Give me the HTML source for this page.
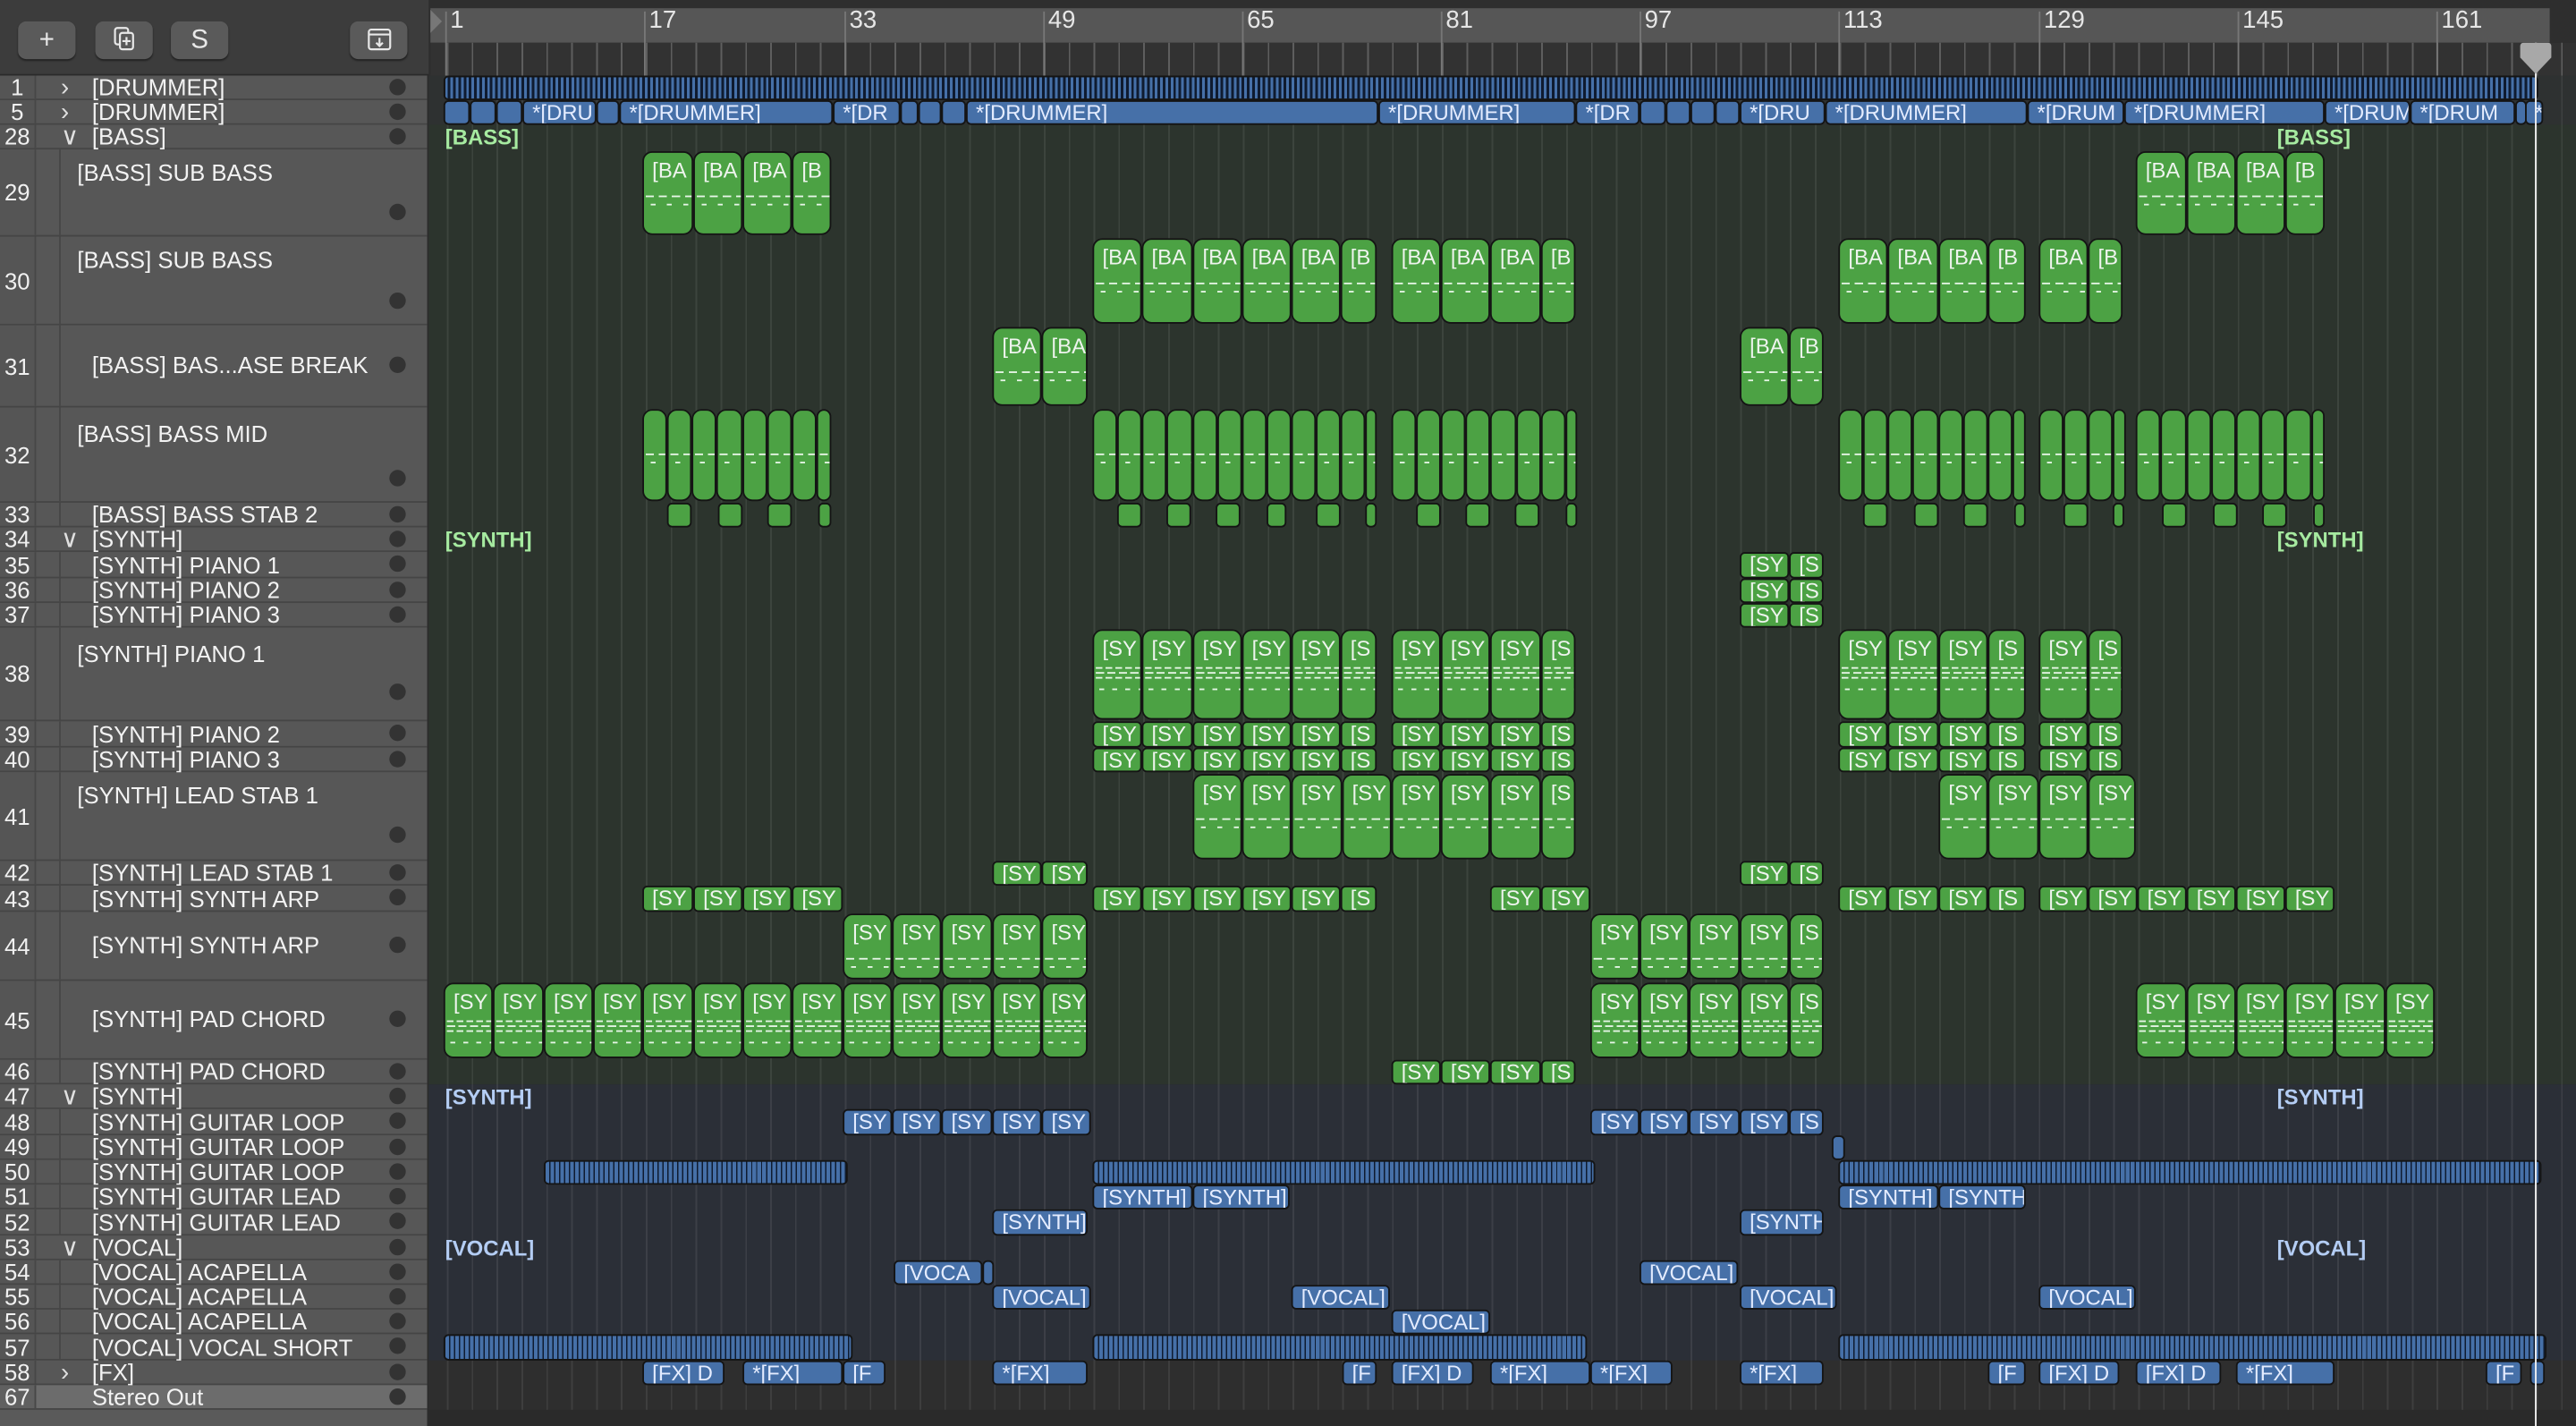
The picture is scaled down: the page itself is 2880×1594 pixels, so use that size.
<!DOCTYPE html>
<html><head><meta charset="utf-8"><style>
*{margin:0;padding:0;box-sizing:border-box}
html,body{width:2880px;height:1594px;overflow:hidden;background:#2a2a2a}
#s{position:absolute;left:0;top:0;width:1568px;height:868px;transform:scale(1.836735);transform-origin:0 0;font-family:"Liberation Sans",sans-serif;background:#2b2b2b;overflow:hidden}
.a{position:absolute}
.btn{position:absolute;top:13px;height:23px;width:35px;background:#5a5a5a;border-radius:5px;color:#e8e8e8;font-size:16px;text-align:center;line-height:23px;box-shadow:0 1px 1px #222}
.bn{position:absolute;top:7px;width:1px;height:39px;background:#777}
.bt{position:absolute;top:4px;color:#e6e6e6;font-size:15px}
.l{position:absolute;left:0;width:260px;background:#575757;border-bottom:1px solid #454545}
.l b{position:absolute;left:0;top:0;width:22px;height:100%;text-align:center;color:#f0f0f0;font-size:14px;font-weight:normal;background:#555;border-right:1px solid #474747}
.l span{position:absolute;left:56px;color:#f2f2f2;font-size:14px;white-space:nowrap}
.l u{position:absolute;left:237px;width:10px;height:10px;border-radius:50%;background:#333;margin-top:-1px}
.l i{position:absolute;left:37px;color:#e0e0e0;font-size:15px;font-style:normal;line-height:15px}
.c::before{content:"";position:absolute;left:36px;top:0;width:1px;height:100%;background:#474747}
.r{position:absolute;left:0;width:1568px}
.r>div{position:absolute;top:0;bottom:0;border:1px solid #141414;border-radius:3px;overflow:hidden;color:#eef4ee;font-size:13px;white-space:nowrap;padding-left:5px;line-height:13px}
.T>div{top:1px;bottom:1px;border-radius:6px;padding-top:3px;line-height:16px}
.g{background:#4ca244}
.b{background:#4670a8;color:#e4ecff!important}
.T>.g{background:repeating-linear-gradient(90deg,#e6f5e6 0 5px,transparent 5px 8px) 1px 26px/100% 1px no-repeat,repeating-linear-gradient(90deg,#e6f5e6 0 3px,transparent 3px 10px) 4px 31px/100% 1px no-repeat,#4ca244}
.P>.g{background:repeating-linear-gradient(90deg,#e6f5e6 0 4px,transparent 4px 6px) 1px 22px/100% 1px no-repeat,repeating-linear-gradient(90deg,#e6f5e6 0 5px,transparent 5px 7px) 1px 25px/100% 1px no-repeat,repeating-linear-gradient(90deg,#e6f5e6 0 4px,transparent 4px 6px) 1px 28px/100% 1px no-repeat,repeating-linear-gradient(90deg,#e6f5e6 0 3px,transparent 3px 8px) 3px 35px/100% 1px no-repeat,#4ca244}
.st{background:repeating-linear-gradient(90deg,#4670a8 0 2.2px,#0f1b30 2.2px 3px)!important}
.gl{position:absolute;font-weight:bold;font-size:13px}
</style></head><body><div id="s">
<!-- header -->
<div class="a" style="left:0;top:0;width:261px;height:46px;background:#3c3c3c;border-bottom:1px solid #2a2a2a"></div>
<div class="btn" style="left:11px">+</div>
<div class="btn" style="left:58px"><svg width="14" height="16" viewBox="0 0 14 16" style="margin-top:3px"><rect x="1" y="1" width="8" height="10" rx="1.5" fill="none" stroke="#e8e8e8" stroke-width="1.2"/><rect x="4" y="4" width="8" height="10" rx="1.5" fill="#5a5a5a" stroke="#e8e8e8" stroke-width="1.2"/><path d="M8 6.5v5M5.5 9h5" stroke="#e8e8e8" stroke-width="1.2"/></svg></div>
<div class="btn" style="left:104px">S</div>
<div class="btn" style="left:213px"><svg width="16" height="16" viewBox="0 0 16 16" style="margin-top:3px"><rect x="1.5" y="2" width="13" height="12" rx="1.5" fill="none" stroke="#e8e8e8" stroke-width="1.2"/><path d="M1.5 5h13M8 7v5M6 10l2 2 2-2" fill="none" stroke="#e8e8e8" stroke-width="1.2"/></svg></div>
<div class="a" style="left:261px;top:0;width:1307px;height:46px;background:#2e2e2e"></div>
<div class="a" style="left:262px;top:5px;width:1290px;height:21px;background:#565656"></div>
<div class="a" style="left:262px;top:26px;width:1306px;height:20px;background:#323232 repeating-linear-gradient(90deg,transparent 0 10px,#5e5e5e 10px 11px,transparent 11px 15.14px)"></div>
<div class="a" style="left:262px;top:6px;width:0;height:0;border-top:7px solid transparent;border-bottom:7px solid transparent;border-left:7px solid #777"></div>
<div class="bn" style="left:271px"></div><div class="bt" style="left:274px">1</div>
<div class="bn" style="left:392px"></div><div class="bt" style="left:395px">17</div>
<div class="bn" style="left:514px"></div><div class="bt" style="left:517px">33</div>
<div class="bn" style="left:635px"></div><div class="bt" style="left:638px">49</div>
<div class="bn" style="left:756px"></div><div class="bt" style="left:759px">65</div>
<div class="bn" style="left:877px"></div><div class="bt" style="left:880px">81</div>
<div class="bn" style="left:998px"></div><div class="bt" style="left:1001px">97</div>
<div class="bn" style="left:1119px"></div><div class="bt" style="left:1122px">113</div>
<div class="bn" style="left:1241px"></div><div class="bt" style="left:1244px">129</div>
<div class="bn" style="left:1362px"></div><div class="bt" style="left:1365px">145</div>
<div class="bn" style="left:1483px"></div><div class="bt" style="left:1486px">161</div>

<!-- left panel -->
<div class="a" style="left:0;top:46px;width:261px;height:822px;background:#5a5a5a;border-right:1px solid #2a2a2a"></div>
<div class="l" style="top:46px;height:15px"><b style="line-height:15px">1</b><i style="top:0">&#x203A;</i><span style="top:-1px">[DRUMMER]</span><u style="top:3px"></u></div>
<div class="l" style="top:61px;height:15px"><b style="line-height:15px">5</b><i style="top:0">&#x203A;</i><span style="top:-1px">[DRUMMER]</span><u style="top:3px"></u></div>
<div class="l" style="top:76px;height:15px"><b style="line-height:15px">28</b><i style="top:0">&#x2228;</i><span style="top:-1px">[BASS]</span><u style="top:3px"></u></div>
<div class="l c" style="top:91px;height:53px"><b style="line-height:53px">29</b><span style="top:6px;left:47px">[BASS] SUB BASS</span><u style="top:34px"></u></div>
<div class="l c" style="top:144px;height:54px"><b style="line-height:54px">30</b><span style="top:6px;left:47px">[BASS] SUB BASS</span><u style="top:35px"></u></div>
<div class="l c" style="top:198px;height:50px"><b style="line-height:50px">31</b><span style="top:16px">[BASS] BAS...ASE BREAK</span><u style="top:20px"></u></div>
<div class="l c" style="top:248px;height:58px"><b style="line-height:58px">32</b><span style="top:8px;left:47px">[BASS] BASS MID</span><u style="top:39px"></u></div>
<div class="l c" style="top:306px;height:15px"><b style="line-height:15px">33</b><span style="top:-1px">[BASS] BASS STAB 2</span><u style="top:3px"></u></div>
<div class="l" style="top:321px;height:15px"><b style="line-height:15px">34</b><i style="top:0">&#x2228;</i><span style="top:-1px">[SYNTH]</span><u style="top:3px"></u></div>
<div class="l c" style="top:336px;height:16px"><b style="line-height:16px">35</b><span style="top:0">[SYNTH] PIANO 1</span><u style="top:3px"></u></div>
<div class="l c" style="top:352px;height:15px"><b style="line-height:15px">36</b><span style="top:-1px">[SYNTH] PIANO 2</span><u style="top:3px"></u></div>
<div class="l c" style="top:367px;height:15px"><b style="line-height:15px">37</b><span style="top:-1px">[SYNTH] PIANO 3</span><u style="top:3px"></u></div>
<div class="l c" style="top:382px;height:57px"><b style="line-height:57px">38</b><span style="top:8px;left:47px">[SYNTH] PIANO 1</span><u style="top:35px"></u></div>
<div class="l c" style="top:439px;height:16px"><b style="line-height:16px">39</b><span style="top:0">[SYNTH] PIANO 2</span><u style="top:3px"></u></div>
<div class="l c" style="top:455px;height:15px"><b style="line-height:15px">40</b><span style="top:-1px">[SYNTH] PIANO 3</span><u style="top:3px"></u></div>
<div class="l c" style="top:470px;height:54px"><b style="line-height:54px">41</b><span style="top:6px;left:47px">[SYNTH] LEAD STAB 1</span><u style="top:34px"></u></div>
<div class="l c" style="top:524px;height:15px"><b style="line-height:15px">42</b><span style="top:-1px">[SYNTH] LEAD STAB 1</span><u style="top:3px"></u></div>
<div class="l c" style="top:539px;height:16px"><b style="line-height:16px">43</b><span style="top:0">[SYNTH] SYNTH ARP</span><u style="top:3px"></u></div>
<div class="l c" style="top:555px;height:42px"><b style="line-height:42px">44</b><span style="top:12px">[SYNTH] SYNTH ARP</span><u style="top:16px"></u></div>
<div class="l c" style="top:597px;height:48px"><b style="line-height:48px">45</b><span style="top:15px">[SYNTH] PAD CHORD</span><u style="top:19px"></u></div>
<div class="l c" style="top:645px;height:15px"><b style="line-height:15px">46</b><span style="top:-1px">[SYNTH] PAD CHORD</span><u style="top:3px"></u></div>
<div class="l" style="top:660px;height:15px"><b style="line-height:15px">47</b><i style="top:0">&#x2228;</i><span style="top:-1px">[SYNTH]</span><u style="top:3px"></u></div>
<div class="l c" style="top:675px;height:16px"><b style="line-height:16px">48</b><span style="top:0">[SYNTH] GUITAR LOOP</span><u style="top:3px"></u></div>
<div class="l c" style="top:691px;height:15px"><b style="line-height:15px">49</b><span style="top:-1px">[SYNTH] GUITAR LOOP</span><u style="top:3px"></u></div>
<div class="l c" style="top:706px;height:15px"><b style="line-height:15px">50</b><span style="top:-1px">[SYNTH] GUITAR LOOP</span><u style="top:3px"></u></div>
<div class="l c" style="top:721px;height:15px"><b style="line-height:15px">51</b><span style="top:-1px">[SYNTH] GUITAR LEAD</span><u style="top:3px"></u></div>
<div class="l c" style="top:736px;height:16px"><b style="line-height:16px">52</b><span style="top:0">[SYNTH] GUITAR LEAD</span><u style="top:3px"></u></div>
<div class="l" style="top:752px;height:15px"><b style="line-height:15px">53</b><i style="top:0">&#x2228;</i><span style="top:-1px">[VOCAL]</span><u style="top:3px"></u></div>
<div class="l c" style="top:767px;height:15px"><b style="line-height:15px">54</b><span style="top:-1px">[VOCAL] ACAPELLA</span><u style="top:3px"></u></div>
<div class="l c" style="top:782px;height:15px"><b style="line-height:15px">55</b><span style="top:-1px">[VOCAL] ACAPELLA</span><u style="top:3px"></u></div>
<div class="l c" style="top:797px;height:15px"><b style="line-height:15px">56</b><span style="top:-1px">[VOCAL] ACAPELLA</span><u style="top:3px"></u></div>
<div class="l c" style="top:812px;height:16px"><b style="line-height:16px">57</b><span style="top:0">[VOCAL] VOCAL SHORT</span><u style="top:3px"></u></div>
<div class="l" style="top:828px;height:15px"><b style="line-height:15px">58</b><i style="top:0">&#x203A;</i><span style="top:-1px">[FX]</span><u style="top:3px"></u></div>
<div class="l" style="top:843px;height:15px;background:#6c6c6c"><b style="line-height:15px;background:#606060">67</b><span style="top:-1px">Stereo Out</span><u style="top:3px"></u></div>

<!-- track backgrounds -->
<div class="a" style="left:261px;top:46px;width:1307px;height:30px;background:#2e3131"></div>
<div class="a" style="left:261px;top:76px;width:1307px;height:584px;background:#2c342d"></div>
<div class="a" style="left:261px;top:660px;width:1307px;height:168px;background:#2b2f37"></div>
<div class="a" style="left:261px;top:828px;width:1307px;height:30px;background:#2e2e2e"></div>
<div class="a" style="left:261px;top:858px;width:1307px;height:10px;background:#2a2a2a"></div>
<div class="a" style="left:272px;top:46px;width:1296px;height:812px;background:repeating-linear-gradient(90deg,rgba(255,255,255,.08) 0 1px,transparent 1px 15.14px)"></div>

<!-- track rows -->
<div class="r" style="top:46px;height:15px"><div class="st" style="left:270px;width:1275px;background:repeating-linear-gradient(90deg,#4670a8 0 1.6px,#0f1b30 1.6px 3.2px)!important"></div></div>
<div class="r" style="top:61px;height:15px">
<div class="b" style="left:270px;width:16px"></div><div class="b" style="left:286px;width:16px"></div><div class="b" style="left:302px;width:16px"></div><div class="b" style="left:318px;width:45px">*[DRU</div><div class="b" style="left:363px;width:14px"></div><div class="b" style="left:377px;width:130px">*[DRUMMER]</div><div class="b" style="left:507px;width:41px">*[DR</div><div class="b" style="left:548px;width:11px"></div><div class="b" style="left:559px;width:14px"></div><div class="b" style="left:573px;width:15px"></div><div class="b" style="left:588px;width:251px">*[DRUMMER]</div><div class="b" style="left:839px;width:120px">*[DRUMMER]</div><div class="b" style="left:959px;width:39px">*[DR</div><div class="b" style="left:998px;width:16px"></div><div class="b" style="left:1014px;width:15px"></div><div class="b" style="left:1029px;width:15px"></div><div class="b" style="left:1044px;width:15px"></div><div class="b" style="left:1059px;width:52px">*[DRU</div><div class="b" style="left:1111px;width:123px">*[DRUMMER]</div><div class="b" style="left:1234px;width:59px">*[DRUM</div><div class="b" style="left:1293px;width:122px">*[DRUMMER]</div><div class="b" style="left:1415px;width:52px">*[DRUM</div><div class="b" style="left:1467px;width:64px">*[DRUM</div><div class="b" style="left:1531px;width:6px"></div><div class="b" style="left:1537px;width:11px">*[</div></div>

<div class="gl" style="left:271px;top:76px;color:#a6eaa0">[BASS]</div><div class="gl" style="left:1386px;top:76px;color:#a6eaa0">[BASS]</div>
<div class="gl" style="left:271px;top:321px;color:#a6eaa0">[SYNTH]</div><div class="gl" style="left:1386px;top:321px;color:#a6eaa0">[SYNTH]</div>
<div class="gl" style="left:271px;top:660px;color:#b4cdf4">[SYNTH]</div><div class="gl" style="left:1386px;top:660px;color:#b4cdf4">[SYNTH]</div>
<div class="gl" style="left:271px;top:752px;color:#b4cdf4">[VOCAL]</div><div class="gl" style="left:1386px;top:752px;color:#b4cdf4">[VOCAL]</div>

<div class="r T" style="top:91px;height:53px">
<div class="g" style="left:391px;width:31px">[BA</div><div class="g" style="left:422px;width:30px">[BA</div><div class="g" style="left:452px;width:30px">[BA</div><div class="g" style="left:482px;width:24px">[B</div>
<div class="g" style="left:1300px;width:31px">[BA</div><div class="g" style="left:1331px;width:30px">[BA</div><div class="g" style="left:1361px;width:30px">[BA</div><div class="g" style="left:1391px;width:24px">[B</div></div>

<div class="r T" style="top:144px;height:54px">
<div class="g" style="left:665px;width:30px">[BA</div><div class="g" style="left:695px;width:31px">[BA</div><div class="g" style="left:726px;width:30px">[BA</div><div class="g" style="left:756px;width:30px">[BA</div><div class="g" style="left:786px;width:30px">[BA</div><div class="g" style="left:816px;width:22px">[B</div>
<div class="g" style="left:847px;width:30px">[BA</div><div class="g" style="left:877px;width:30px">[BA</div><div class="g" style="left:907px;width:31px">[BA</div><div class="g" style="left:938px;width:21px">[B</div>
<div class="g" style="left:1119px;width:30px">[BA</div><div class="g" style="left:1149px;width:31px">[BA</div><div class="g" style="left:1180px;width:30px">[BA</div><div class="g" style="left:1210px;width:23px">[B</div>
<div class="g" style="left:1241px;width:30px">[BA</div><div class="g" style="left:1271px;width:21px">[B</div></div>

<div class="r T" style="top:198px;height:50px">
<div class="g" style="left:604px;width:30px">[BA</div><div class="g" style="left:634px;width:28px">[BA</div><div class="g" style="left:1059px;width:30px">[BA</div><div class="g" style="left:1089px;width:21px">[B</div></div>

<div class="r T" style="top:248px;height:58px">
<div class="g" style="left:391px;width:15px"></div><div class="g" style="left:406px;width:15px"></div><div class="g" style="left:421px;width:15px"></div><div class="g" style="left:436px;width:16px"></div><div class="g" style="left:452px;width:15px"></div><div class="g" style="left:467px;width:15px"></div><div class="g" style="left:482px;width:15px"></div><div class="g" style="left:497px;width:9px"></div>
<div class="g" style="left:665px;width:15px"></div><div class="g" style="left:680px;width:15px"></div><div class="g" style="left:695px;width:15px"></div><div class="g" style="left:710px;width:16px"></div><div class="g" style="left:726px;width:15px"></div><div class="g" style="left:741px;width:15px"></div><div class="g" style="left:756px;width:15px"></div><div class="g" style="left:771px;width:15px"></div><div class="g" style="left:786px;width:15px"></div><div class="g" style="left:801px;width:15px"></div><div class="g" style="left:816px;width:15px"></div><div class="g" style="left:831px;width:7px"></div>
<div class="g" style="left:847px;width:15px"></div><div class="g" style="left:862px;width:15px"></div><div class="g" style="left:877px;width:15px"></div><div class="g" style="left:892px;width:15px"></div><div class="g" style="left:907px;width:16px"></div><div class="g" style="left:923px;width:15px"></div><div class="g" style="left:938px;width:15px"></div><div class="g" style="left:953px;width:7px"></div>
<div class="g" style="left:1119px;width:15px"></div><div class="g" style="left:1134px;width:15px"></div><div class="g" style="left:1149px;width:15px"></div><div class="g" style="left:1164px;width:16px"></div><div class="g" style="left:1180px;width:15px"></div><div class="g" style="left:1195px;width:15px"></div><div class="g" style="left:1210px;width:15px"></div><div class="g" style="left:1225px;width:8px"></div>
<div class="g" style="left:1241px;width:15px"></div><div class="g" style="left:1256px;width:15px"></div><div class="g" style="left:1271px;width:15px"></div><div class="g" style="left:1286px;width:8px"></div>
<div class="g" style="left:1300px;width:15px"></div><div class="g" style="left:1315px;width:16px"></div><div class="g" style="left:1331px;width:15px"></div><div class="g" style="left:1346px;width:15px"></div><div class="g" style="left:1361px;width:15px"></div><div class="g" style="left:1376px;width:15px"></div><div class="g" style="left:1391px;width:16px"></div><div class="g" style="left:1407px;width:8px"></div></div>

<div class="r" style="top:306px;height:15px">
<div class="g" style="left:406px;width:15px"></div><div class="g" style="left:437px;width:15px"></div><div class="g" style="left:467px;width:15px"></div><div class="g" style="left:498px;width:8px"></div>
<div class="g" style="left:680px;width:15px"></div><div class="g" style="left:710px;width:15px"></div><div class="g" style="left:740px;width:15px"></div><div class="g" style="left:771px;width:12px"></div><div class="g" style="left:801px;width:15px"></div><div class="g" style="left:831px;width:7px"></div>
<div class="g" style="left:862px;width:15px"></div><div class="g" style="left:892px;width:15px"></div><div class="g" style="left:922px;width:15px"></div><div class="g" style="left:953px;width:7px"></div>
<div class="g" style="left:1134px;width:15px"></div><div class="g" style="left:1165px;width:15px"></div><div class="g" style="left:1195px;width:15px"></div><div class="g" style="left:1226px;width:7px"></div>
<div class="g" style="left:1256px;width:15px"></div><div class="g" style="left:1286px;width:7px"></div>
<div class="g" style="left:1316px;width:15px"></div><div class="g" style="left:1347px;width:15px"></div><div class="g" style="left:1377px;width:15px"></div><div class="g" style="left:1408px;width:7px"></div></div>

<div class="r" style="top:336px;height:16px"><div class="g" style="left:1059px;width:30px">[SY</div><div class="g" style="left:1089px;width:21px">[S</div></div>
<div class="r" style="top:352px;height:15px"><div class="g" style="left:1059px;width:30px">[SY</div><div class="g" style="left:1089px;width:21px">[S</div></div>
<div class="r" style="top:367px;height:15px"><div class="g" style="left:1059px;width:30px">[SY</div><div class="g" style="left:1089px;width:21px">[S</div></div>

<div class="r T P" style="top:382px;height:57px">
<div class="g" style="left:665px;width:30px">[SY</div><div class="g" style="left:695px;width:31px">[SY</div><div class="g" style="left:726px;width:30px">[SY</div><div class="g" style="left:756px;width:30px">[SY</div><div class="g" style="left:786px;width:30px">[SY</div><div class="g" style="left:816px;width:22px">[S</div>
<div class="g" style="left:847px;width:30px">[SY</div><div class="g" style="left:877px;width:30px">[SY</div><div class="g" style="left:907px;width:31px">[SY</div><div class="g" style="left:938px;width:21px">[S</div>
<div class="g" style="left:1119px;width:30px">[SY</div><div class="g" style="left:1149px;width:31px">[SY</div><div class="g" style="left:1180px;width:30px">[SY</div><div class="g" style="left:1210px;width:23px">[S</div>
<div class="g" style="left:1241px;width:30px">[SY</div><div class="g" style="left:1271px;width:21px">[S</div></div>

<div class="r" style="top:439px;height:16px">
<div class="g" style="left:665px;width:30px">[SY</div><div class="g" style="left:695px;width:31px">[SY</div><div class="g" style="left:726px;width:30px">[SY</div><div class="g" style="left:756px;width:30px">[SY</div><div class="g" style="left:786px;width:30px">[SY</div><div class="g" style="left:816px;width:22px">[S</div>
<div class="g" style="left:847px;width:30px">[SY</div><div class="g" style="left:877px;width:30px">[SY</div><div class="g" style="left:907px;width:31px">[SY</div><div class="g" style="left:938px;width:21px">[S</div>
<div class="g" style="left:1119px;width:30px">[SY</div><div class="g" style="left:1149px;width:31px">[SY</div><div class="g" style="left:1180px;width:30px">[SY</div><div class="g" style="left:1210px;width:23px">[S</div>
<div class="g" style="left:1241px;width:30px">[SY</div><div class="g" style="left:1271px;width:21px">[S</div></div>
<div class="r" style="top:455px;height:15px">
<div class="g" style="left:665px;width:30px">[SY</div><div class="g" style="left:695px;width:31px">[SY</div><div class="g" style="left:726px;width:30px">[SY</div><div class="g" style="left:756px;width:30px">[SY</div><div class="g" style="left:786px;width:30px">[SY</div><div class="g" style="left:816px;width:22px">[S</div>
<div class="g" style="left:847px;width:30px">[SY</div><div class="g" style="left:877px;width:30px">[SY</div><div class="g" style="left:907px;width:31px">[SY</div><div class="g" style="left:938px;width:21px">[S</div>
<div class="g" style="left:1119px;width:30px">[SY</div><div class="g" style="left:1149px;width:31px">[SY</div><div class="g" style="left:1180px;width:30px">[SY</div><div class="g" style="left:1210px;width:23px">[S</div>
<div class="g" style="left:1241px;width:30px">[SY</div><div class="g" style="left:1271px;width:21px">[S</div></div>

<div class="r T" style="top:470px;height:54px">
<div class="g" style="left:726px;width:30px">[SY</div><div class="g" style="left:756px;width:30px">[SY</div><div class="g" style="left:786px;width:31px">[SY</div><div class="g" style="left:817px;width:30px">[SY</div><div class="g" style="left:847px;width:30px">[SY</div><div class="g" style="left:877px;width:30px">[SY</div><div class="g" style="left:907px;width:31px">[SY</div><div class="g" style="left:938px;width:21px">[S</div>
<div class="g" style="left:1180px;width:30px">[SY</div><div class="g" style="left:1210px;width:31px">[SY</div><div class="g" style="left:1241px;width:30px">[SY</div><div class="g" style="left:1271px;width:29px">[SY</div></div>

<div class="r" style="top:524px;height:15px"><div class="g" style="left:604px;width:30px">[SY</div><div class="g" style="left:634px;width:28px">[SY</div><div class="g" style="left:1059px;width:30px">[SY</div><div class="g" style="left:1089px;width:21px">[S</div></div>

<div class="r" style="top:539px;height:16px">
<div class="g" style="left:391px;width:31px">[SY</div><div class="g" style="left:422px;width:30px">[SY</div><div class="g" style="left:452px;width:30px">[SY</div><div class="g" style="left:482px;width:31px">[SY</div>
<div class="g" style="left:665px;width:30px">[SY</div><div class="g" style="left:695px;width:31px">[SY</div><div class="g" style="left:726px;width:30px">[SY</div><div class="g" style="left:756px;width:30px">[SY</div><div class="g" style="left:786px;width:30px">[SY</div><div class="g" style="left:816px;width:22px">[S</div>
<div class="g" style="left:907px;width:31px">[SY</div><div class="g" style="left:938px;width:30px">[SY</div>
<div class="g" style="left:1119px;width:30px">[SY</div><div class="g" style="left:1149px;width:31px">[SY</div><div class="g" style="left:1180px;width:30px">[SY</div><div class="g" style="left:1210px;width:23px">[S</div>
<div class="g" style="left:1241px;width:30px">[SY</div><div class="g" style="left:1271px;width:30px">[SY</div><div class="g" style="left:1301px;width:30px">[SY</div><div class="g" style="left:1331px;width:30px">[SY</div><div class="g" style="left:1361px;width:30px">[SY</div><div class="g" style="left:1391px;width:30px">[SY</div></div>

<div class="r T" style="top:555px;height:42px">
<div class="g" style="left:513px;width:30px">[SY</div><div class="g" style="left:543px;width:30px">[SY</div><div class="g" style="left:573px;width:31px">[SY</div><div class="g" style="left:604px;width:30px">[SY</div><div class="g" style="left:634px;width:28px">[SY</div>
<div class="g" style="left:968px;width:30px">[SY</div><div class="g" style="left:998px;width:30px">[SY</div><div class="g" style="left:1028px;width:31px">[SY</div><div class="g" style="left:1059px;width:30px">[SY</div><div class="g" style="left:1089px;width:21px">[S</div></div>

<div class="r T P" style="top:597px;height:48px">
<div class="g" style="left:270px;width:30px">[SY</div><div class="g" style="left:300px;width:31px">[SY</div><div class="g" style="left:331px;width:30px">[SY</div><div class="g" style="left:361px;width:30px">[SY</div><div class="g" style="left:391px;width:31px">[SY</div><div class="g" style="left:422px;width:30px">[SY</div><div class="g" style="left:452px;width:30px">[SY</div><div class="g" style="left:482px;width:31px">[SY</div><div class="g" style="left:513px;width:30px">[SY</div><div class="g" style="left:543px;width:30px">[SY</div><div class="g" style="left:573px;width:31px">[SY</div><div class="g" style="left:604px;width:30px">[SY</div><div class="g" style="left:634px;width:28px">[SY</div>
<div class="g" style="left:968px;width:30px">[SY</div><div class="g" style="left:998px;width:30px">[SY</div><div class="g" style="left:1028px;width:31px">[SY</div><div class="g" style="left:1059px;width:30px">[SY</div><div class="g" style="left:1089px;width:21px">[S</div>
<div class="g" style="left:1300px;width:31px">[SY</div><div class="g" style="left:1331px;width:30px">[SY</div><div class="g" style="left:1361px;width:30px">[SY</div><div class="g" style="left:1391px;width:30px">[SY</div><div class="g" style="left:1421px;width:31px">[SY</div><div class="g" style="left:1452px;width:30px">[SY</div></div>

<div class="r" style="top:645px;height:15px"><div class="g" style="left:847px;width:30px">[SY</div><div class="g" style="left:877px;width:30px">[SY</div><div class="g" style="left:907px;width:31px">[SY</div><div class="g" style="left:938px;width:21px">[S</div></div>

<div class="r" style="top:675px;height:16px">
<div class="b" style="left:513px;width:30px">[SY</div><div class="b" style="left:543px;width:30px">[SY</div><div class="b" style="left:573px;width:31px">[SY</div><div class="b" style="left:604px;width:30px">[SY</div><div class="b" style="left:634px;width:30px">[SY</div>
<div class="b" style="left:968px;width:30px">[SY</div><div class="b" style="left:998px;width:30px">[SY</div><div class="b" style="left:1028px;width:31px">[SY</div><div class="b" style="left:1059px;width:30px">[SY</div><div class="b" style="left:1089px;width:21px">[S</div></div>
<div class="r" style="top:691px;height:15px"><div class="b" style="left:1115px;width:8px"></div></div>
<div class="r" style="top:706px;height:15px"><div class="b st" style="left:331px;width:185px"></div><div class="b st" style="left:665px;width:306px"></div><div class="b st" style="left:1119px;width:428px"></div></div>
<div class="r" style="top:721px;height:15px"><div class="b" style="left:665px;width:61px">[SYNTH]</div><div class="b" style="left:726px;width:59px">[SYNTH]</div><div class="b" style="left:1119px;width:61px">[SYNTH]</div><div class="b" style="left:1180px;width:53px">[SYNTH</div></div>
<div class="r" style="top:736px;height:16px"><div class="b" style="left:604px;width:58px">[SYNTH]</div><div class="b" style="left:1059px;width:51px">[SYNTH</div></div>
<div class="r" style="top:767px;height:15px"><div class="b" style="left:544px;width:54px">[VOCA</div><div class="b" style="left:598px;width:6px"></div><div class="b" style="left:998px;width:60px">[VOCAL]</div></div>
<div class="r" style="top:782px;height:15px"><div class="b" style="left:604px;width:60px">[VOCAL]</div><div class="b" style="left:786px;width:60px">[VOCAL]</div><div class="b" style="left:1059px;width:59px">[VOCAL]</div><div class="b" style="left:1241px;width:59px">[VOCAL]</div></div>
<div class="r" style="top:797px;height:15px"><div class="b" style="left:847px;width:60px">[VOCAL]</div></div>
<div class="r" style="top:812px;height:16px"><div class="b st" style="left:270px;width:249px"></div><div class="b st" style="left:665px;width:301px"></div><div class="b st" style="left:1119px;width:431px"></div></div>
<div class="r" style="top:828px;height:15px">
<div class="b" style="left:391px;width:50px">[FX] D</div><div class="b" style="left:452px;width:61px">*[FX]</div><div class="b" style="left:513px;width:26px">[F</div><div class="b" style="left:604px;width:58px">*[FX]</div><div class="b" style="left:817px;width:21px">[F</div><div class="b" style="left:847px;width:50px">[FX] D</div><div class="b" style="left:907px;width:61px">*[FX]</div><div class="b" style="left:968px;width:50px">*[FX]</div><div class="b" style="left:1059px;width:51px">*[FX]</div><div class="b" style="left:1210px;width:23px">[F</div><div class="b" style="left:1241px;width:49px">[FX] D</div><div class="b" style="left:1300px;width:52px">[FX] D</div><div class="b" style="left:1361px;width:60px">*[FX]</div><div class="b" style="left:1513px;width:22px">[F</div><div class="b" style="left:1540px;width:9px"></div></div>

<!-- playhead -->
<div class="a" style="left:1543px;top:26px;width:1px;height:842px;background:#f4f4f4"></div>
<svg class="a" style="left:1534px;top:26px" width="19" height="20" viewBox="0 0 19 20"><path d="M2 0h15a2 2 0 0 1 2 2v7l-9.5 10L0 9V2a2 2 0 0 1 2-2z" fill="#a8a8a8"/></svg>
</div>
</body></html>
